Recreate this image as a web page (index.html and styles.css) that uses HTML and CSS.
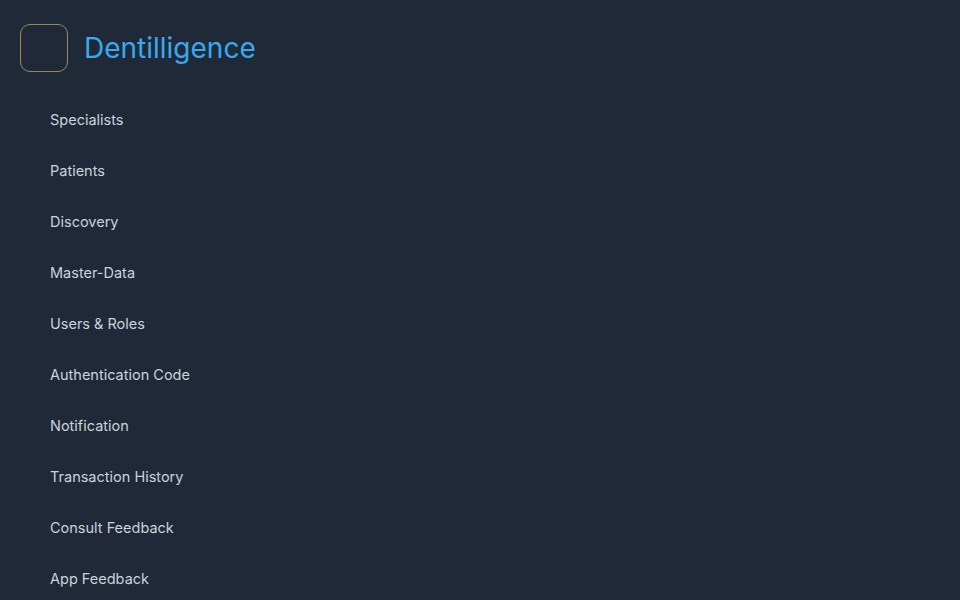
FILE: index.html
```html
<!DOCTYPE html>
<html lang="en">
<head>
  <meta charset="UTF-8" />
  <meta name="viewport" content="width=device-width, initial-scale=1.0"/>
  <title>Dentilligence</title>
  <link rel="stylesheet" href="styles.css">
</head>
<body>
  <aside class="sidebar">
    <div class="brand">
      <div class="logo"></div>
      <div class="brand-name">Dentilligence</div>
    </div>
    <nav class="menu">
      <a href="#" class="menu-item">Specialists</a>
      <a href="#" class="menu-item">Patients</a>
      <a href="#" class="menu-item">Discovery</a>
      <a href="#" class="menu-item">Master-Data</a>
      <a href="#" class="menu-item">Users &amp; Roles</a>
      <a href="#" class="menu-item">Authentication Code</a>
      <a href="#" class="menu-item">Notification</a>
      <a href="#" class="menu-item">Transaction History</a>
      <a href="#" class="menu-item">Consult Feedback</a>
      <a href="#" class="menu-item">App Feedback</a>
    </nav>
  </aside>
</body>
</html>
```

FILE: styles.css
```css
body {
  font-family: Inter, "Liberation Sans", sans-serif;
  background: #1f2937;
  margin: 0;
  height: 100vh;
  overflow: hidden;
}
.sidebar {
  display: flex;
  flex-direction: column;
}
.brand {
  display: flex;
  align-items: center;
  gap: 16px;
  padding: 24px 20px 22px;
}
.logo {
  width: 46px;
  height: 46px;
  border: 1px solid #9c8a52;
  border-radius: 10px;
}
.brand-name {
  font-size: 28px;
  color: #38a9ef;
  line-height: 48px;
}
.menu {
  display: flex;
  flex-direction: column;
}
.menu-item {
  display: block;
  padding-left: 50px;
  line-height: 51px;
  font-size: 14.5px;
  color: #cbd2dc;
  text-decoration: none;
}
```
